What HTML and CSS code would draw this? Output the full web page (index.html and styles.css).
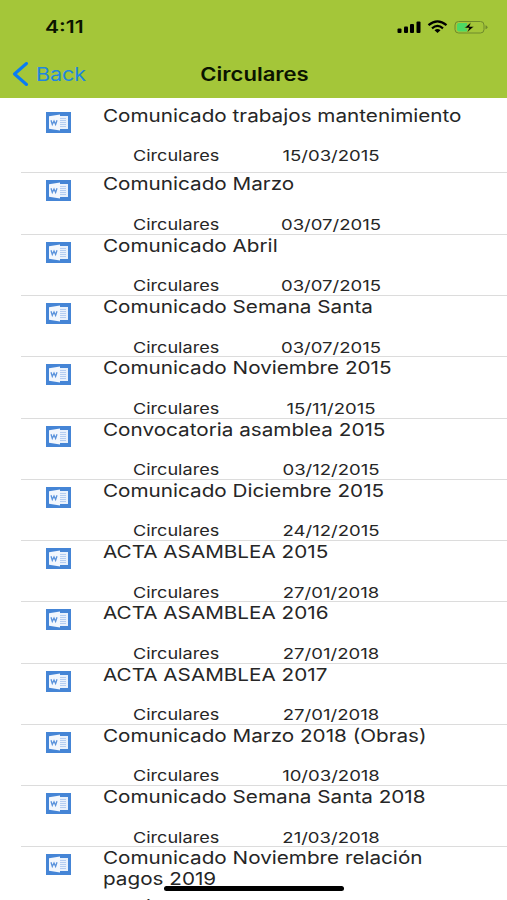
FILE: index.html
```html
<!DOCTYPE html>
<html lang="es">
<head>
    <meta charset="UTF-8">
    <meta name="viewport" content="width=device-width, initial-scale=1.0">
    <title>Circulares</title>
    <link rel="stylesheet" href="styles.css">
</head>
<body>

    <!-- Word document icon, used by every row -->
    <svg width="0" height="0" class="defs">
        <symbol id="word" viewBox="0 0 25 21">
            <rect width="25" height="21" fill="#4585d6"/>
            <rect x="12" y="4" width="10" height="13" fill="#e9f1fc"/>
            <path d="M14 6.5h6M14 8.5h6M14 10.5h6M14 12.5h6M14 14.5h6" stroke="#b4cdf1" stroke-width="1"/>
            <path d="M3 4.2L14 2.5v16L3 16.8z" fill="#f3f7fd"/>
            <path d="M5 8.2l1.3 4.3L8 9l1.6 3.5L11 8.2" fill="none" stroke="#5b93dc" stroke-width="1.3"/>
        </symbol>
    </svg>

    <header class="header">
        <div class="status">
            <span class="time">4:11</span>
            <svg class="status-icons" width="92" height="16" viewBox="0 0 92 16">
                <rect x="0.5" y="9.5" width="4" height="4.500" rx="1"/>
                <rect x="7" y="7.5" width="4" height="6.5" rx="1"/>
                <rect x="13" y="5" width="4" height="9" rx="1"/>
                <rect x="19.5" y="2.5" width="4" height="11.5" rx="1"/>
                <path d="M31.5 6.2Q40.5-1.5 49.5 6.2M35 9.4Q40.5 4.5 46 9.4" fill="none" stroke="#000" stroke-width="2.2"/>
                <path d="M37.5 11.2Q40.5 9 43.5 11.2L40.5 14z"/>
                <rect x="58" y="2.5" width="29" height="11.5" rx="3.5" fill="none" stroke="#6f8a2c"/>
                <path d="M62 4h8v8.5h-8q-2 0-2-2V6q0-2 2-2z" fill="#4cd964"/>
                <path d="M88.500 6.200q2 .5 2 2t-2 2z" fill="#6f8a2c"/>
                <path d="M74 3.2l-6.5 5.8h4.5l-2 4.5L77 7.5h-4.500z" stroke="#a4c639" stroke-width=".5"/>
            </svg>
        </div>
        <nav class="nav">
            <a class="back" href="#">
                <svg width="17" height="24" viewBox="0 0 17 24"><path d="M14.5 1.5L2.5 12l12 10.5" fill="none" stroke="#087cf5" stroke-width="3" stroke-linecap="round" stroke-linejoin="round"/></svg>
                <span class="back-text">Back</span>
            </a>
            <h1 class="title">Circulares</h1>
        </nav>
    </header>

    <ul class="list" id="list"></ul>

    <div class="home-bar"></div>

    <script src="script.js"></script>
</body>
</html>
```

FILE: styles.css
```css
* {
    box-sizing: border-box;
}

body {
    margin: 0;
    height: 900px;
    overflow: hidden;
    background: #fff;
    color: #262626;
    font-family: 'Inter', 'Liberation Sans', sans-serif;
}

.defs {
    display: block;
}

.header {
    height: 98.2px;
    background: #a4c639;
    color: #0b1400;
}

.status {
    display: flex;
    justify-content: space-between;
    align-items: center;
    height: 50px;
    padding: 4px 18px 0 45px;
}

.time {
    font-size: 17px;
    font-weight: 600;
    transform: scaleX(1.24);
    transform-origin: left;
}

.nav {
    display: grid;
    grid-template-columns: 1fr auto 1fr;
    align-items: center;
    height: 48px;
    padding-left: 12px;
}

.back {
    display: flex;
    align-items: center;
    gap: 7px;
    color: #2086e0;
    text-decoration: none;
}

.back-text {
    font-size: 18.5px;
    transform: scaleX(1.16);
    transform-origin: left;
}

.title {
    margin: 0 11px 0 1px;
    font-size: 18.5px;
    font-weight: 600;
    transform: scaleX(1.19);
}

/* Rows */
.list {
    margin: 0;
    padding: 0;
    list-style: none;
}

.row {
    display: flex;
    height: 61.28px;
    margin-left: 21px;
    padding-left: 25px;
    border-bottom: 1px solid #dcdcdc;
}

.row:first-child {
    height: 75.3px;
    padding-top: 6.8px;
}

.row:last-child {
    height: 80px;
}

.icon {
    flex: none;
    width: 25px;
    height: 21px;
    margin: 7px 32px 0 0;
}

.name {
    display: block;
    width: 320px;
    height: 40.5px;
    font-size: 17.8px;
    line-height: 21px;
    white-space: pre;
    transform: scaleX(1.163);
    transform-origin: left;
}

.row:last-child .name {
    height: 48px;
}

.meta {
    display: flex;
    padding-left: 30px;
    font-size: 15px;
    line-height: 22px;
}

.kind {
    width: 138px;
    transform: scaleX(1.205);
    transform-origin: left;
}

.date {
    width: 120px;
    text-align: center;
    transform: scaleX(1.235);
}

.home-bar {
    position: absolute;
    left: 164px;
    top: 886px;
    width: 180px;
    height: 5px;
    border-radius: 3px;
    background: #000;
}
```

FILE: script.js
```js
const circulares = [
    ['Comunicado trabajos mantenimiento', '15/03/2015'],
    ['Comunicado Marzo', '03/07/2015'],
    ['Comunicado Abril', '03/07/2015'],
    ['Comunicado Semana Santa', '03/07/2015'],
    ['Comunicado Noviembre 2015', '15/11/2015'],
    ['Convocatoria asamblea 2015', '03/12/2015'],
    ['Comunicado Diciembre 2015', '24/12/2015'],
    ['ACTA ASAMBLEA 2015', '27/01/2018'],
    ['ACTA ASAMBLEA 2016', '27/01/2018'],
    ['ACTA ASAMBLEA 2017', '27/01/2018'],
    ['Comunicado Marzo 2018 (Obras)', '10/03/2018'],
    ['Comunicado Semana Santa 2018', '21/03/2018'],
    ['Comunicado Noviembre relación\npagos 2019', '20/12/2018']
];

document.getElementById('list').innerHTML = circulares.map(([name, date]) => `
    <li class="row">
        <svg class="icon"><use href="#word"/></svg>
        <div class="info">
            <span class="name">${name}</span>
            <div class="meta">
                <span class="kind">Circulares</span>
                <span class="date">${date}</span>
            </div>
        </div>
    </li>`).join('');
```
